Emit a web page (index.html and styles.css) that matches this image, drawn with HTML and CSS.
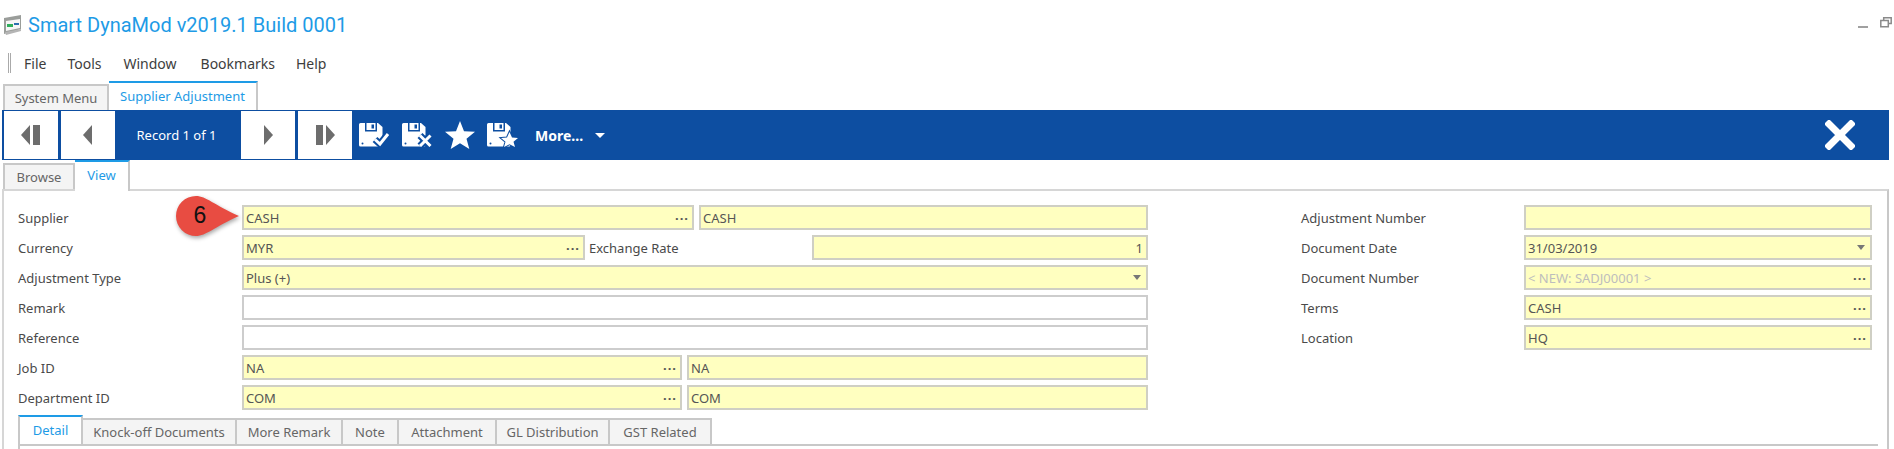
FILE: index.html
```html
<!DOCTYPE html>
<html lang="en">

<head>
    <meta charset="utf-8">
    <meta name="viewport" content="width=device-width, initial-scale=1.0">
    <title>Smart DynaMod v2019.1 Build 0001</title>
    <link rel="stylesheet" href="styles.css">
</head>

<body>
    <svg class="defs" width="0" height="0">
        <symbol id="disk" viewBox="0 0 31 24">
            <path fill="#fff" d="M1.500 0H19L23.500 4V22A1.500 1.500 0 0 1 22 23.500H1.500A1.500 1.500 0 0 1 0 22V1.500A1.500 1.500 0 0 1 1.500 0Z" />
            <path fill="#0d4ea1" d="M6 0H18V8.500H6Z" />
            <path fill="#fff" d="M7.500 0H16.500V7H7.500Z" />
            <path fill="#0d4ea1" d="M12.500 1.500H15V5.500H12.500Z" />
            <circle fill="#0d4ea1" cx="3.500" cy="20.500" r="1" />
        </symbol>
    </svg>

    <header class="titlebar">
        <svg class="appicon" viewBox="0 0 19 20">
            <path fill="#9a9d9a" d="M1 3L18 0V14L1 19Z" />
            <path fill="#f6f6f6" d="M3 6L17 4V13L3 16Z" />
            <path fill="#2fae5c" d="M4 9H10V12H4Z" />
            <path fill="#2c6fb0" d="M11 8H16V10H11Z" />
            <path fill="#b5b5b5" d="M2 17L18 14V16L3 20Z" />
        </svg>
        <h1>Smart DynaMod v2019.1 Build 0001</h1>
        <div class="winbtns">
            <span class="minimize"></span>
            <svg class="restore" viewBox="0 0 12 12">
                <path fill="none" stroke="#8a8a8a" stroke-width="1.500" d="M3.700 2.800V.8H11.200V6.500H8.700M.8 3.500H8.300V9.800H.8Z" />
            </svg>
        </div>
    </header>

    <nav class="menubar">
        <span class="grip"></span>
        <a class="menu-file">File</a>
        <a class="menu-tools">Tools</a>
        <a class="menu-window">Window</a>
        <a class="menu-bookmarks">Bookmarks</a>
        <a>Help</a>
    </nav>

    <div class="tabs doc-tabs">
        <div class="tab tab-system">System Menu</div>
        <div class="tab active tab-supplier">Supplier Adjustment</div>
    </div>

    <section class="toolbar">
        <button class="navbtn">
            <svg viewBox="0 0 20 22"><path fill="#6d6d6d" d="M9 1V21L0 11ZM12 1H19V21H12Z" /></svg>
        </button>
        <button class="navbtn">
            <svg viewBox="0 0 20 22"><path fill="#6d6d6d" d="M14 1V21L5 11Z" /></svg>
        </button>
        <div class="record">Record 1 of 1</div>
        <button class="navbtn">
            <svg viewBox="0 0 20 22"><path fill="#6d6d6d" d="M6 1V21L15 11Z" /></svg>
        </button>
        <button class="navbtn">
            <svg viewBox="0 0 20 22"><path fill="#6d6d6d" d="M1 1H8V21H1ZM11 1V21L20 11Z" /></svg>
        </button>

        <svg class="tool" viewBox="0 0 31 24">
            <use href="#disk" />
            <path fill="none" stroke="#0d4ea1" stroke-width="7" d="M16 16.500L21 21L29 11" />
            <path fill="none" stroke="#fff" stroke-width="3" d="M16 16.500L21 21L29 11" />
        </svg>
        <svg class="tool" viewBox="0 0 31 24">
            <use href="#disk" />
            <path fill="none" stroke="#0d4ea1" stroke-width="7" d="M18 12.500L28.500 23M28.500 12.500L18 23" />
            <path fill="none" stroke="#fff" stroke-width="3" d="M18 12.500L28.500 23M28.500 12.500L18 23" />
        </svg>
        <svg class="tool star" viewBox="0 0 30 28">
            <path fill="#fff" d="M15 0L19 10.200L30 10.800L21.500 17.700L24.300 28L15 22.200L5.700 28L8.500 17.700L0 10.800L11 10.200Z" />
        </svg>
        <svg class="tool" viewBox="0 0 31 24">
            <use href="#disk" />
            <path fill="#fff" stroke="#0d4ea1" stroke-width="2" paint-order="stroke" d="M22.500 9L25 14.500L31 15L26.500 18.800L28 24L22.500 21.200L17 24L18.500 18.800L14 15L20 14.500Z" />
        </svg>
        <div class="more">More...</div>
        <span class="more-caret"></span>
        <svg class="closebtn" viewBox="0 0 30 30">
            <path fill="none" stroke="#fff" stroke-width="7" stroke-linecap="square" d="M4 4L26 26M26 4L4 26" />
        </svg>
    </section>

    <div class="tabs view-tabs">
        <div class="tab tab-browse">Browse</div>
        <div class="tab active tab-view">View</div>
    </div>

    <main class="panel">
        <div class="form">
            <div class="col-left">
                <div class="row">
                    <label>Supplier</label>
                    <div class="field yellow w-supplier"><span>CASH</span><i class="dots">···</i></div>
                    <div class="field yellow grow"><span>CASH</span></div>
                    <div class="callout">
                        <svg viewBox="0 0 66 44"><path fill="#e84c42" d="M22 2C32 2 40 11 65 22C40 33 32 42 22 42A20 20 0 0 1 22 2Z" /></svg>
                        <b>6</b>
                    </div>
                </div>
                <div class="row">
                    <label>Currency</label>
                    <div class="field yellow w-currency"><span>MYR</span><i class="dots">···</i></div>
                    <label class="rate-label">Exchange Rate</label>
                    <div class="field yellow grow numeric"><span>1</span></div>
                </div>
                <div class="row">
                    <label>Adjustment Type</label>
                    <div class="field yellow grow"><span>Plus (+)</span><i class="caret"></i></div>
                </div>
                <div class="row">
                    <label>Remark</label>
                    <div class="field grow"></div>
                </div>
                <div class="row">
                    <label>Reference</label>
                    <div class="field grow"></div>
                </div>
                <div class="row">
                    <label>Job ID</label>
                    <div class="field yellow w-job"><span>NA</span><i class="dots">···</i></div>
                    <div class="field yellow grow"><span>NA</span></div>
                </div>
                <div class="row">
                    <label>Department ID</label>
                    <div class="field yellow w-job"><span>COM</span><i class="dots">···</i></div>
                    <div class="field yellow grow"><span>COM</span></div>
                </div>
            </div>

            <div class="col-right">
                <div class="row">
                    <label>Adjustment Number</label>
                    <div class="field yellow grow"></div>
                </div>
                <div class="row">
                    <label>Document Date</label>
                    <div class="field yellow grow"><span>31/03/2019</span><i class="caret"></i></div>
                </div>
                <div class="row">
                    <label>Document Number</label>
                    <div class="field yellow grow muted"><span>&lt; NEW: SADJ00001 &gt;</span><i class="dots">···</i></div>
                </div>
                <div class="row">
                    <label>Terms</label>
                    <div class="field yellow grow"><span>CASH</span><i class="dots">···</i></div>
                </div>
                <div class="row">
                    <label>Location</label>
                    <div class="field yellow grow"><span>HQ</span><i class="dots">···</i></div>
                </div>
            </div>
        </div>

        <div class="tabs detail-tabs">
            <div class="tab active t-detail">Detail</div>
            <div class="tab t-knock">Knock-off Documents</div>
            <div class="tab t-more">More Remark</div>
            <div class="tab t-note">Note</div>
            <div class="tab t-attach">Attachment</div>
            <div class="tab t-gl">GL Distribution</div>
            <div class="tab t-gst">GST Related</div>
        </div>
        <div class="detail-body"></div>
    </main>
</body></html>
```

FILE: styles.css
```css
html,
body {
    margin: 0;
    height: 449px;
    overflow: hidden;
    background: #fff;
}

body {
    font-family: "Noto Sans", sans-serif;
    font-size: 14px;
    color: #444;
}

.defs {
    display: block;
    height: 0;
}

/* title bar */
.titlebar {
    display: flex;
    align-items: center;
    height: 50px;
    padding-left: 3px;
}

.appicon {
    width: 19px;
    height: 20px;
}

h1 {
    margin: 0 0 0 6px;
    font-family: Roboto, sans-serif;
    font-size: 20px;
    font-weight: 400;
    color: #1e9be6;
    white-space: nowrap;
}

.winbtns {
    display: flex;
    align-items: center;
    gap: 12px;
    margin-left: auto;
    margin-right: 2px;
}

.minimize {
    width: 10px;
    height: 2px;
    margin-top: 4px;
    background: #a0a0a0;
}

.restore {
    width: 12px;
    height: 12px;
    margin-top: -4px;
}

/* menu */
.menubar {
    display: flex;
    align-items: center;
    height: 26px;
    padding-left: 8px;
    color: #3d3d3d;
}

.grip {
    width: 1px;
    height: 20px;
    margin-right: 13px;
    border-left: 1px solid #aaa;
    border-right: 1px solid #aaa;
}

.menubar a {
    margin-right: 21px;
}

.menubar .menu-tools {
    margin-right: 22px;
}

.menubar .menu-window {
    margin-right: 24px;
}

/* tabs */
.tabs {
    display: flex;
    align-items: flex-end;
}

.tab {
    box-sizing: border-box;
    height: 26px;
    line-height: 24px;
    text-align: center;
    font-size: 13px;
    color: #666;
    background: #f4f4f4;
    border: 2px solid #c8c8c8;
    border-bottom: 0;
    border-left-width: 0;
    white-space: nowrap;
}

.tab.active {
    height: 29px;
    line-height: 26px;
    color: #1e9be6;
    background: #fff;
    border-top: 2px solid #1e9be6;
}

.doc-tabs {
    height: 30px;
    padding-left: 3px;
    margin-top: 4px;
}

.tab-system {
    width: 106px;
    border-left-width: 2px;
}

.tab-supplier {
    width: 149px;
}

/* blue toolbar */
.toolbar {
    box-sizing: border-box;
    display: flex;
    align-items: center;
    height: 50px;
    margin: 0 5px 0 2px;
    padding-left: 2px;
    background: #0d4ea1;
}

.navbtn {
    display: flex;
    align-items: center;
    justify-content: center;
    width: 54px;
    height: 48px;
    margin-right: 3px;
    padding: 0;
    border: 0;
    background: #fff;
}

.navbtn svg {
    width: 20px;
    height: 22px;
}

.record {
    width: 123px;
    margin-left: -3px;
    margin-right: 3px;
    text-align: center;
    font-size: 13px;
    color: #fff;
}

.tool {
    width: 31px;
    height: 24px;
    margin-right: 12px;
}

.navbtn + .tool {
    margin-left: 4px;
}

.star {
    width: 30px;
    height: 28px;
}

.more {
    margin-left: 5px;
    font-size: 14px;
    font-weight: 700;
    color: #fff;
}

.more-caret {
    width: 0;
    height: 0;
    margin-left: 12px;
    border-top: 5px solid #fff;
    border-left: 5px solid transparent;
    border-right: 5px solid transparent;
}

.closebtn {
    width: 30px;
    height: 30px;
    margin-left: auto;
    margin-right: 34px;
}

.view-tabs {
    height: 29px;
    padding-left: 3px;
}

.tab-browse {
    width: 72px;
    border-left-width: 2px;
}

.tab-view {
    width: 55px;
    position: relative;
    margin-bottom: -2px;
}

.tabs .tab-view {
    height: 31px;
}

/* form panel */
.panel {
    box-sizing: border-box;
    margin: 0 5px 0 2px;
    height: 261px;
    padding: 14px 15px 0 14px;
    border: 2px solid #d6d6d6;
    border-bottom: 0;
    border-right-color: #c8c8c8;
}

.form {
    display: flex;
    height: 210px;
}

.col-left {
    width: 1132px;
}

.col-right {
    width: 572px;
    margin-left: 153px;
}

.col-left label {
    flex: 0 0 224px;
}

.col-right label {
    flex: 0 0 223px;
}

.row {
    position: relative;
    display: flex;
    align-items: center;
    gap: 5px;
    height: 25px;
    margin-bottom: 5px;
}

.row label {
    margin-right: -5px;
    font-size: 13px;
    color: #4a4a4a;
    white-space: nowrap;
}

.row .rate-label {
    flex: 0 0 223px;
    margin-left: -1px;
}

.field {
    box-sizing: border-box;
    display: flex;
    align-items: center;
    justify-content: space-between;
    height: 25px;
    padding: 0 3px 0 2px;
    font-size: 13px;
    color: #555;
    border: 2px solid #cdcdcd;
    background: #fff;
}

.yellow {
    background: #ffffc0;
    border-color: #cfcfc4;
}

.grow {
    flex: 1;
}

.numeric {
    justify-content: flex-end;
}

.muted span {
    color: #bdbdbd;
}

.w-supplier {
    flex: 0 0 452px;
}

.w-currency {
    flex: 0 0 343px;
}

.w-job {
    flex: 0 0 440px;
}

.dots {
    font-style: normal;
    font-weight: 700;
    letter-spacing: 1px;
    color: #555;
}

.caret {
    width: 0;
    height: 0;
    margin-right: 2px;
    border-top: 5px solid #777;
    border-left: 4px solid transparent;
    border-right: 4px solid transparent;
}

/* numbered marker over the supplier field */
.callout {
    position: absolute;
    left: 156px;
    top: -11px;
    width: 66px;
    height: 44px;
}

.callout svg {
    display: block;
    width: 66px;
    height: 44px;
    filter: drop-shadow(1px 2px 2px rgba(0, 0, 0, .35));
}

.callout b {
    position: absolute;
    top: -1px;
    left: 0;
    width: 52px;
    font-family: "Liberation Sans", sans-serif;
    font-size: 23px;
    font-weight: 400;
    line-height: 44px;
    text-align: center;
    color: #111;
}

/* bottom tab strip */
.detail-tabs {
    height: 29px;
}

.t-detail {
    width: 65px;
    border-left-width: 2px;
}

.t-knock {
    width: 154px;
}

.t-more {
    width: 106px;
}

.t-note {
    width: 56px;
}

.t-attach {
    width: 98px;
}

.t-gl {
    width: 113px;
}

.t-gst {
    width: 102px;
}

.detail-body {
    height: 10px;
    margin-right: -6px;
    border-top: 2px solid #c8c8c8;
    border-left: 2px solid #c8c8c8;
}
```
